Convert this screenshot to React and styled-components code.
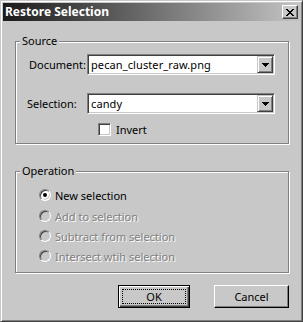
import React from "react";
import styled, { createGlobalStyle } from "styled-components";

const FACE = "#c8c8c8";

const GlobalStyle = createGlobalStyle`
  html, body {
    margin: 0;
    padding: 0;
    background: ${FACE};
  }
  body {
    font-family: "Noto Sans", "Liberation Sans", sans-serif;
    font-size: 11px;
    color: #000;
  }
`;

const Window = styled.div`
  box-sizing: border-box;
  width: 303px;
  height: 322px;
  padding: 2px;
  border: 1px solid;
  border-color: ${FACE} #404040 #404040 ${FACE};
  box-shadow: inset 1px 1px 0 #fff, inset -1px -1px 0 #808080;
  background: ${FACE};
  display: flex;
  flex-direction: column;
`;

const TitleBar = styled.div`
  height: 18px;
  display: flex;
  align-items: center;
  justify-content: space-between;
  padding: 0 2px;
  background: linear-gradient(to right, #1a1a1a, #c4c4c4);
`;

const Title = styled.span`
  color: #fff;
  font-weight: bold;
  font-size: 12px;
  line-height: 18px;
`;

const CloseButton = styled.button`
  box-sizing: border-box;
  width: 16px;
  height: 14px;
  padding: 0;
  border: 1px solid;
  border-color: #fff #404040 #404040 #fff;
  box-shadow: inset -1px -1px 0 #808080;
  background: ${FACE};
  display: flex;
  align-items: center;
  justify-content: center;
`;

const Body = styled.div`
  display: flex;
  flex-direction: column;
  padding-left: 12px;
`;

const GroupBox = styled.div`
  position: relative;
  box-sizing: border-box;
  width: 274px;
  height: ${(p) => p.$h}px;
  margin-top: ${(p) => p.$top}px;
  border: 1px solid #808080;
  box-shadow: inset 1px 1px 0 #fff, 1px 1px 0 #fff;
  padding: ${(p) => p.$pad};
`;

const Legend = styled.span`
  position: absolute;
  top: -8px;
  left: 4px;
  padding: 0 2px;
  line-height: 14px;
  background: ${FACE};
`;

const FieldRow = styled.div`
  display: grid;
  grid-template-columns: 60px 188px;
  align-items: center;
  height: 21px;
  margin-top: ${(p) => p.$top || 0}px;
`;

const FieldLabel = styled.label`
  padding-left: ${(p) => p.$indent || 0}px;
  white-space: nowrap;
`;

const Combo = styled.div`
  box-sizing: border-box;
  height: 21px;
  border: 1px solid;
  border-color: #808080 #fff #fff #808080;
  box-shadow: inset 1px 1px 0 #404040, inset -1px -1px 0 ${FACE};
  background: #fff;
  display: flex;
  align-items: center;
  justify-content: space-between;
  padding: 1px;
`;

const ComboText = styled.span`
  padding-left: 2px;
  line-height: 17px;
  letter-spacing: 0.1px;
`;

const DropButton = styled.span`
  box-sizing: border-box;
  width: 16px;
  height: 17px;
  border: 1px solid;
  border-color: ${FACE} #404040 #404040 ${FACE};
  box-shadow: inset 1px 1px 0 #fff, inset -1px -1px 0 #808080;
  background: ${FACE};
  display: flex;
  align-items: center;
  justify-content: center;
`;

const CheckRow = styled.div`
  display: flex;
  align-items: center;
  gap: 5px;
  margin-top: 9px;
  margin-left: 71px;
  height: 13px;
`;

const CheckBox = styled.span`
  box-sizing: border-box;
  width: 13px;
  height: 13px;
  border: 1px solid;
  border-color: #808080 #fff #fff #808080;
  box-shadow: inset 1px 1px 0 #404040, inset -1px -1px 0 ${FACE};
  background: #fff;
`;

const RadioRow = styled.div`
  display: flex;
  align-items: center;
  gap: 4px;
  height: 12px;
  margin-top: ${(p) => p.$top || 0}px;
  color: ${(p) => (p.$disabled ? "#808080" : "#000")};
  text-shadow: ${(p) => (p.$disabled ? "1px 1px 0 #fff" : "none")};
`;

const Radio = styled.span`
  box-sizing: border-box;
  width: 12px;
  height: 12px;
  border-radius: 50%;
  border: 1px solid;
  border-color: #808080 #fff #fff #808080;
  box-shadow: inset 1px 1px 0 #404040, inset -1px -1px 0 ${FACE};
  background: ${(p) => (p.$disabled ? FACE : "#fff")};
  display: flex;
  align-items: center;
  justify-content: center;
  flex-shrink: 0;
  &::after {
    content: "";
    display: ${(p) => (p.$checked ? "block" : "none")};
    width: 4px;
    height: 4px;
    border-radius: 50%;
    background: #000;
  }
`;

const ButtonRow = styled.div`
  display: flex;
  justify-content: flex-end;
  gap: 24px;
  width: 274px;
  margin-top: 12px;
`;

const Button = styled.button`
  position: relative;
  box-sizing: border-box;
  width: ${(p) => p.$w}px;
  height: 23px;
  padding: 0;
  font-family: inherit;
  font-size: 11px;
  color: #000;
  background: ${FACE};
  border: 1px solid;
  border-color: ${(p) => (p.$default ? "#000" : "#fff #000 #000 #fff")};
  box-shadow: ${(p) =>
    p.$default
      ? "inset 1px 1px 0 #fff, inset -1px -1px 0 #404040, inset -2px -2px 0 #808080"
      : "inset -1px -1px 0 #808080"};
  &::after {
    content: "";
    display: ${(p) => (p.$default ? "block" : "none")};
    position: absolute;
    inset: 3px;
    border: 1px dotted #000;
  }
`;

function Arrow() {
  return (
    <svg width="7" height="4" viewBox="0 0 7 4" shapeRendering="crispEdges">
      <path d="M0 0h7v1h-1v1h-1v1h-1v1h-1v-1h-1v-1h-1v-1h-1z" fill="#000" />
    </svg>
  );
}

function CloseIcon() {
  return (
    <svg width="8" height="7" viewBox="0 0 8 7" shapeRendering="crispEdges">
      <path
        d="M0 0h2v1h1v1h2v-1h1v-1h2v1h-1v1h-1v1h-1v1h1v1h1v1h1v1h-2v-1h-1v-1h-2v1h-1v1h-2v-1h1v-1h1v-1h1v-1h-1v-1h-1v-1h-1z"
        fill="#000"
      />
    </svg>
  );
}

function ComboBox({ value }) {
  return (
    <Combo>
      <ComboText>{value}</ComboText>
      <DropButton>
        <Arrow />
      </DropButton>
    </Combo>
  );
}

const operations = [
  { label: "New selection", checked: true, disabled: false, top: 0 },
  { label: "Add to selection", checked: false, disabled: true, top: 9 },
  { label: "Subtract from selection", checked: false, disabled: true, top: 8 },
  { label: "Intersect wtih selection", checked: false, disabled: true, top: 8 },
];

export default function App() {
  return (
    <>
      <GlobalStyle />
      <Window>
        <TitleBar>
          <Title>Restore Selection</Title>
          <CloseButton aria-label="Close">
            <CloseIcon />
          </CloseButton>
        </TitleBar>
        <Body>
          <GroupBox $h={103} $top={20} $pad="12px 0 0 11px">
            <Legend>Source</Legend>
            <FieldRow>
              <FieldLabel $indent={2}>Document:</FieldLabel>
              <ComboBox value="pecan_cluster_raw.png" />
            </FieldRow>
            <FieldRow $top={18}>
              <FieldLabel>Selection:</FieldLabel>
              <ComboBox value="candy" />
            </FieldRow>
            <CheckRow>
              <CheckBox />
              <span>Invert</span>
            </CheckRow>
          </GroupBox>
          <GroupBox $h={102} $top={27} $pad="17px 0 0 23px">
            <Legend>Operation</Legend>
            {operations.map((op) => (
              <RadioRow key={op.label} $top={op.top} $disabled={op.disabled}>
                <Radio $checked={op.checked} $disabled={op.disabled} />
                <span>{op.label}</span>
              </RadioRow>
            ))}
          </GroupBox>
          <ButtonRow>
            <Button $w={72} $default>OK</Button>
            <Button $w={75}>Cancel</Button>
          </ButtonRow>
        </Body>
      </Window>
    </>
  );
}
